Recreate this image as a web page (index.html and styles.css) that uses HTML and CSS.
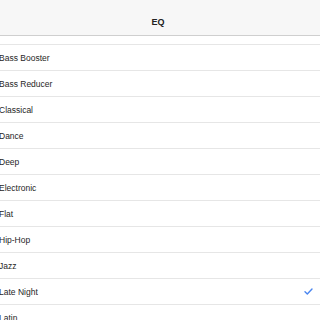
FILE: index.html
```html
<!DOCTYPE html>
<html lang="en">
<head>
    <meta charset="UTF-8">
    <meta name="viewport" content="width=device-width, initial-scale=1.0">
    <link rel="stylesheet" href="styles.css">
    <title>EQ</title>
</head>
<body>
    <div class="nav-bar">
        <h3 class="nav-title">EQ</h3>
    </div>
    <ul class="eq-list">
        <li class="eq-item">Bass Booster</li>
        <li class="eq-item">Bass Reducer</li>
        <li class="eq-item">Classical</li>
        <li class="eq-item">Dance</li>
        <li class="eq-item">Deep</li>
        <li class="eq-item">Electronic</li>
        <li class="eq-item">Flat</li>
        <li class="eq-item">Hip-Hop</li>
        <li class="eq-item">Jazz</li>
        <li class="eq-item selected">Late Night
            <svg class="check" width="9" height="7" viewBox="0 0 9 7">
                <path d="M1 3.8 L3.3 6 L8 1" fill="none" stroke="#4a86f0" stroke-width="1.4" stroke-linecap="round" stroke-linejoin="round"/>
            </svg>
        </li>
        <li class="eq-item">Latin</li>
    </ul>
</body>
</html>
```

FILE: styles.css
```css
*{
    box-sizing: border-box;
}

body{
    margin: 0;
    background-color: #fff;
    font-family: "Liberation Sans", Arial, sans-serif;
    color: #262626;
    overflow: hidden;
}

.nav-bar{
    height: 36px;
    background-color: #f7f7f7;
    border-bottom: 1px solid #cfcfcf;
    display: flex;
    align-items: flex-end;
    justify-content: center;
    padding-bottom: 8px;
}

.nav-title{
    margin: 0 4px 0 0;
    font-size: 9px;
    font-weight: 700;
    color: #222;
}

.eq-list{
    list-style: none;
    margin: 8px 0 0;
    padding: 0;
}

.eq-item{
    height: 26px;
    border-top: 1px solid #e6e6e6;
    display: flex;
    align-items: center;
    justify-content: space-between;
    padding: 0 7px 0 0;
    font-size: 8.5px;
    text-indent: -1px;
}

.check{
    display: block;
}
```
